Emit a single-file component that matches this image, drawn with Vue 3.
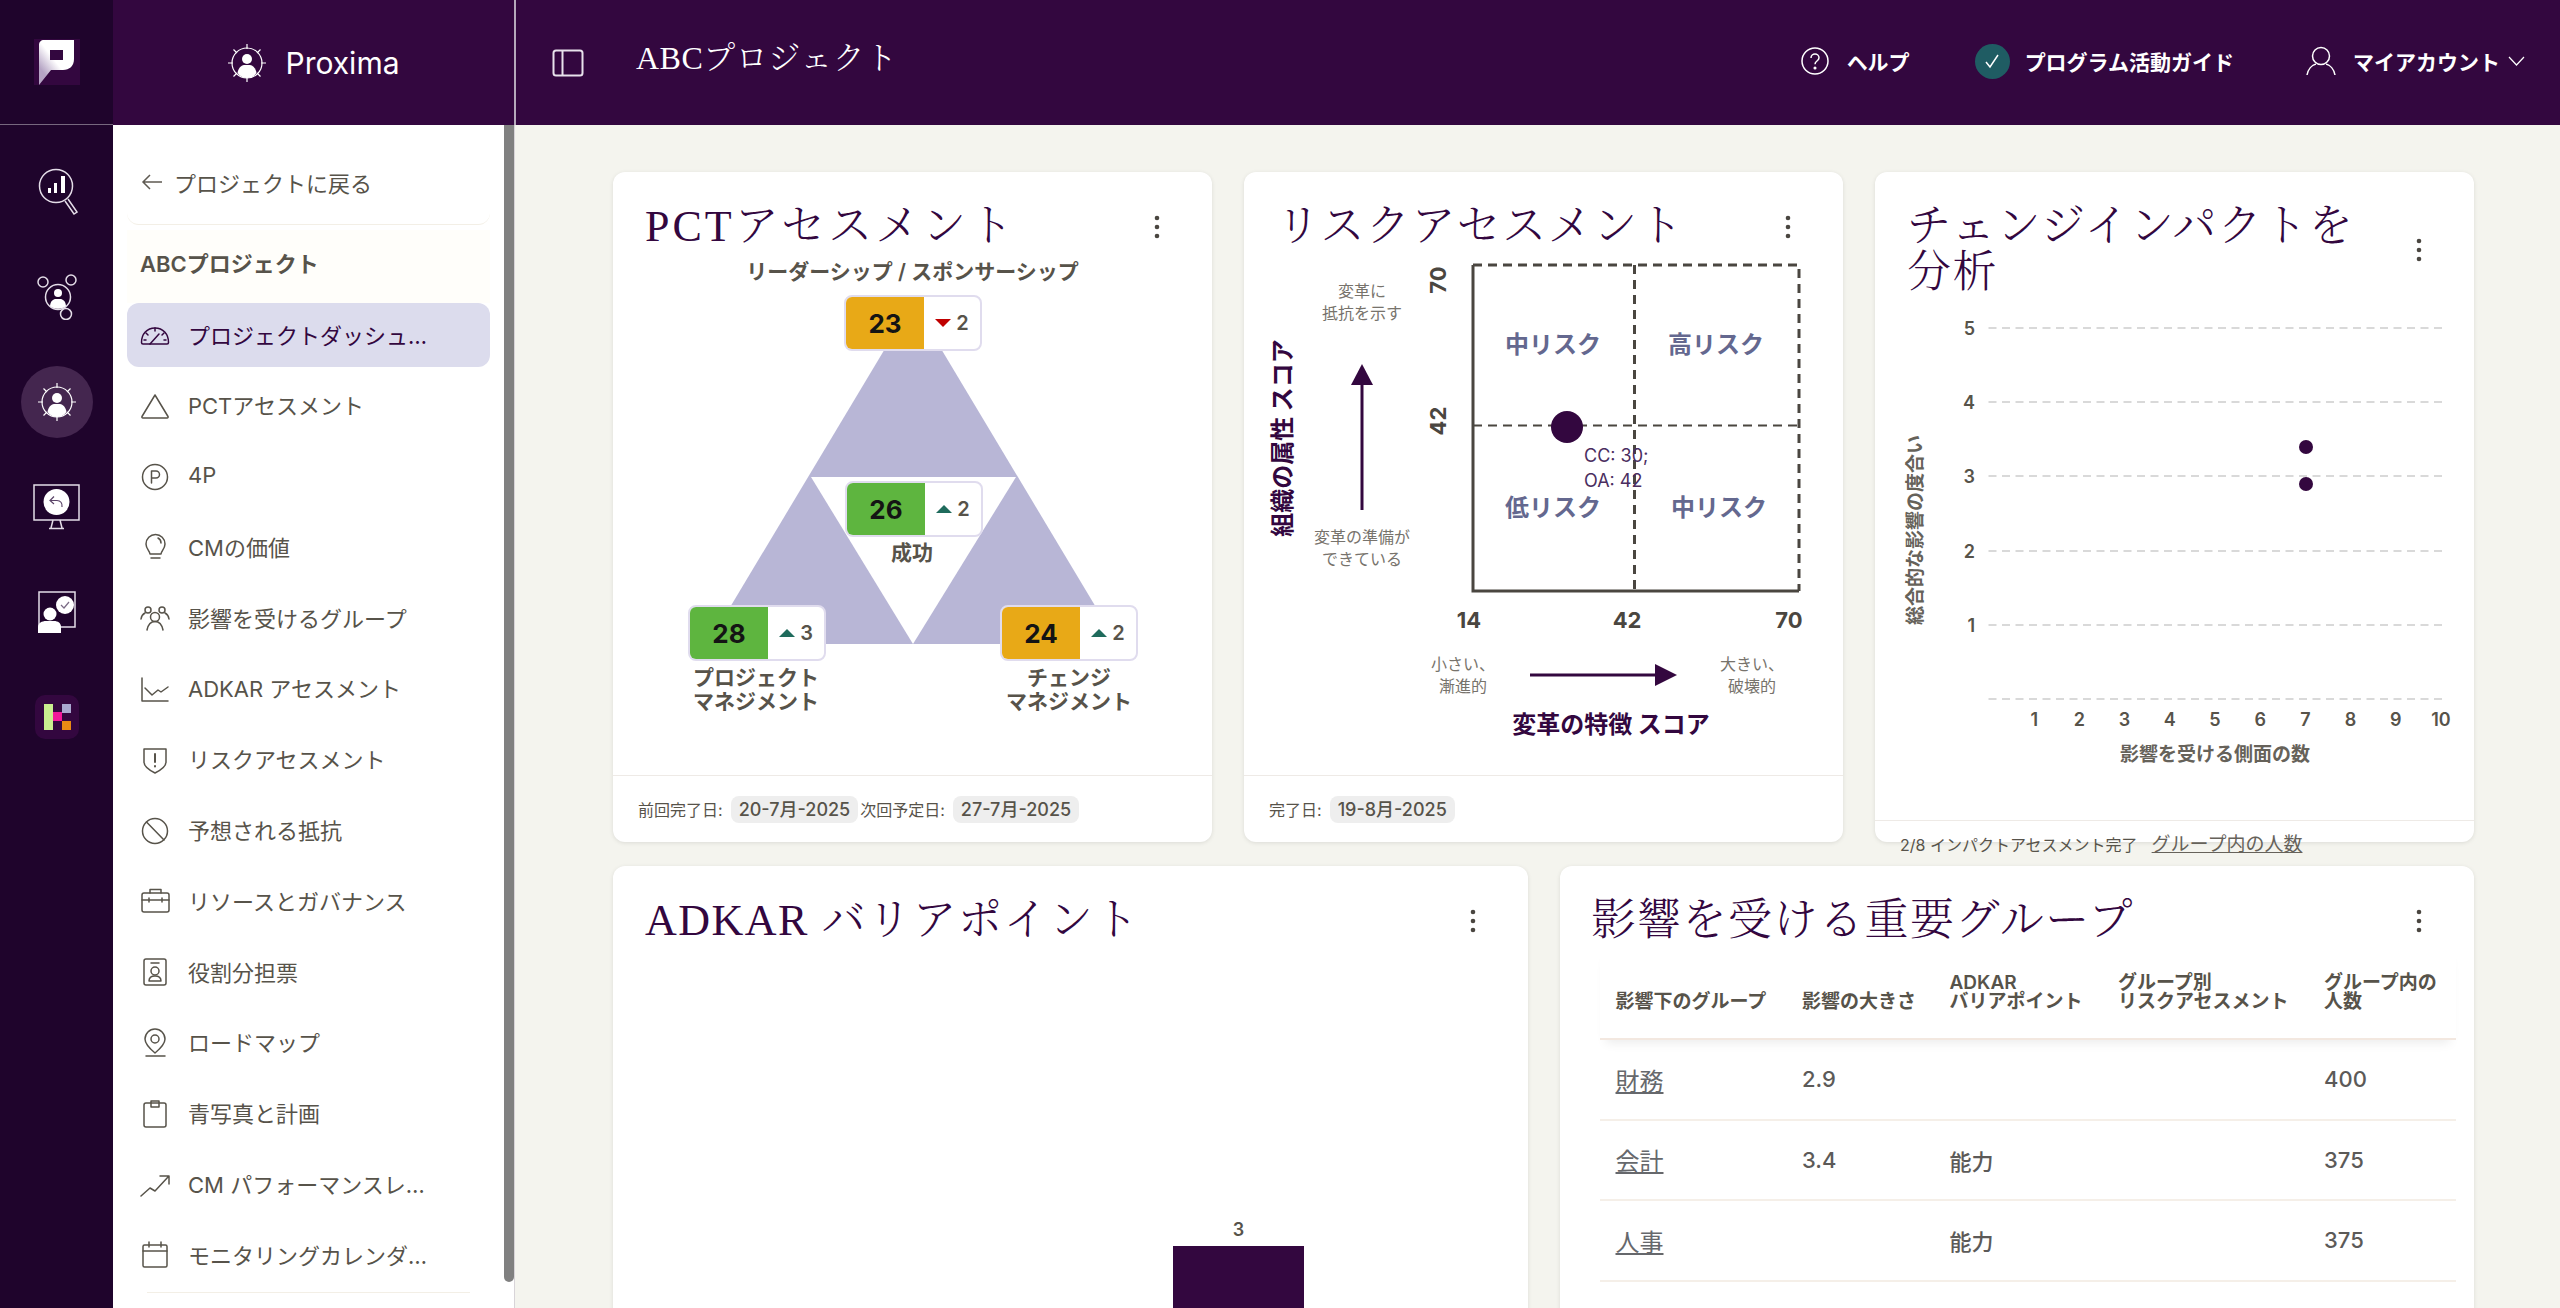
<template>
  <div class="app">
    <svg class="defs" aria-hidden="true">
      <symbol id="proxima" viewBox="0 0 40 40">
        <circle cx="20" cy="20" r="15" fill="none" stroke="currentColor" stroke-width="1.200" />
        <path d="M20 1v5M20 34v5M1 20h5M34 20h5M6.500 6.500l3.500 3.500M33.500 6.500 30 10M6.500 33.500 10 30M33.500 33.500 30 30" fill="none" stroke="currentColor" stroke-width="1.200" />
        <circle cx="20" cy="16" r="5" fill="currentColor" />
        <path d="M10.500 30c.8-5 3.500-7.500 6.500-8h6c3 .5 5.700 3 6.500 8-2.500 3.300-5.500 5-9.500 5s-7-1.700-9.500-5z" fill="currentColor" />
      </symbol>
    </svg>

    <aside class="rail">
      <div class="rail-logo">
        <svg width="46" height="46" viewBox="0 0 46 46">
          <defs>
            <linearGradient id="logoShade" x1="0" y1="1" x2="1" y2="0">
              <stop offset="0.2" stop-color="#b5a4c4" />
              <stop offset="0.5" stop-color="#ffffff" />
            </linearGradient>
          </defs>
          <rect width="46" height="46" fill="#33073f" />
          <path d="M10 1h30v19c0 7-4.500 11-11 11H17L5 46V6c0-3 2-5 5-5z" fill="url(#logoShade)" />
          <rect x="16" y="11" width="13" height="10" fill="#33073f" />
        </svg>
      </div>
      <nav class="rail-list">
        <div class="rail-item">
          <svg width="48" height="52" viewBox="0 0 48 52" fill="none" stroke="#e4dde8" stroke-width="1.500">
            <circle cx="23" cy="20" r="16.500" />
            <path d="M32 35l9 13 3-2-9-13" />
            <path d="M15 22h3v5h-3zM21 17h3v10h-3zM28 10h4v17h-4z" fill="#fff" stroke="none" />
          </svg>
        </div>
        <div class="rail-item">
          <svg width="42" height="46" viewBox="0 0 42 46" fill="none" stroke="#e4dde8" stroke-width="1.500">
            <circle cx="7" cy="8" r="5" />
            <circle cx="35" cy="6" r="5" />
            <circle cx="30" cy="40" r="5.500" />
            <circle cx="22" cy="23" r="12.500" />
            <circle cx="22" cy="19" r="4" fill="#fff" stroke="none" />
            <path d="M14 32c.5-5 3-7 6-7h4c3 0 5.500 2 6 7-4 3.500-12 3.500-16 0z" fill="#fff" stroke="none" />
          </svg>
        </div>
        <div class="rail-item active">
          <svg width="40" height="40" class="proxima-rail"><use href="#proxima" /></svg>
        </div>
        <div class="rail-item">
          <svg width="48" height="46" viewBox="0 0 48 46" fill="none" stroke="#e4dde8" stroke-width="1.500">
            <rect x="1" y="1" width="45" height="35" />
            <path d="M20 36l-2 8M27 36l2 8M16 44.500h15" />
            <circle cx="23.500" cy="18" r="13" fill="#fff" stroke="none" />
            <path d="M29 23c.5-4-1.500-6.500-5-6.500h-6M21 12.500l-4 4 4 3.500" stroke="#5b4468" stroke-width="1.200" />
          </svg>
        </div>
        <div class="rail-item">
          <svg width="40" height="44" viewBox="0 0 40 44" fill="none" stroke="#e4dde8" stroke-width="1.500">
            <rect x="2" y="2" width="36" height="35" />
            <circle cx="28" cy="15" r="9" fill="#fff" stroke="none" />
            <path d="M24 15l3 3 5-6" stroke="#7a6a85" stroke-width="1.200" />
            <circle cx="13" cy="24" r="6.500" fill="#fff" stroke="none" />
            <path d="M1 43v-6c0-4 4-6 8-6h8c4 0 7 2 7 6v6z" fill="#fff" stroke="none" />
          </svg>
        </div>
        <div class="rail-item">
          <svg width="44" height="44" viewBox="0 0 44 44">
            <rect width="44" height="44" rx="10" fill="#33073f" />
            <rect x="9" y="9" width="9" height="26" fill="#c9ee8f" />
            <rect x="18" y="17" width="9" height="9" fill="#f0189a" />
            <rect x="27" y="9" width="9" height="9" fill="#a9a8d0" />
            <rect x="27" y="26" width="9" height="9" fill="#e88a14" />
          </svg>
        </div>
      </nav>
    </aside>

    <div class="shell">
      <header class="topbar">
        <div class="brand">
          <svg width="40" height="40" class="brand-icon"><use href="#proxima" /></svg>
          <span>Proxima</span>
        </div>
        <button class="toggle" type="button" aria-label="メニュー">
          <svg width="32" height="28" viewBox="0 0 32 28" fill="none" stroke="#e8e2ec" stroke-width="2">
            <rect x="1.500" y="1.500" width="29" height="25" rx="2.500" />
            <path d="M10.500 1.500v25" />
          </svg>
        </button>
        <h1 class="project-name">ABCプロジェクト</h1>
        <div class="actions">
          <a class="action help">
            <svg width="28" height="28" viewBox="0 0 28 28" fill="none" stroke="#fff" stroke-width="1.500">
              <circle cx="14" cy="14" r="13" />
              <path d="M10 11c0-2.500 2-4 4-4s4 1.500 4 3.800c0 3.200-4 3.200-4 6.400" />
              <circle cx="14" cy="21" r="0.800" fill="#fff" />
            </svg>
            <span>ヘルプ</span>
          </a>
          <a class="action guide">
            <span class="check">
              <svg width="18" height="18" viewBox="0 0 18 18" fill="none" stroke="#fff" stroke-width="1.500">
                <path d="M3 10l4 5 8-12" />
              </svg>
            </span>
            <span>プログラム活動ガイド</span>
          </a>
          <a class="action account">
            <svg width="30" height="30" viewBox="0 0 30 30" fill="none" stroke="#fff" stroke-width="1.500">
              <circle cx="15" cy="10" r="8.500" />
              <path d="M1 29c1-6 5-10 9-11M29 29c-1-6-5-10-9-11" />
            </svg>
            <span>マイアカウント</span>
            <svg class="chevron" width="17" height="10" viewBox="0 0 17 10" fill="none" stroke="#fff" stroke-width="1.200">
              <path d="M1 1l7.500 8L16 1" />
            </svg>
          </a>
        </div>
      </header>

      <div class="body">
        <aside class="sidebar">
          <div class="back">
            <svg width="22" height="18" viewBox="0 0 22 18" fill="none" stroke="#5f5a52" stroke-width="1.500">
              <path d="M21 9H2M9 2 2 9l7 7" />
            </svg>
            <span>プロジェクトに戻る</span>
          </div>
          <div class="sidebar-project">ABCプロジェクト</div>
          <ul class="nav">
            <li v-for="item in navItems" :key="item.label" class="nav-item" :class="{ active: item.active }">
              <svg class="nav-icon" width="30" height="30" viewBox="0 0 30 30" fill="none" stroke="currentColor" stroke-width="1.500" stroke-linecap="round" stroke-linejoin="round" v-html="item.icon"></svg>
              <span class="nav-label">{{ item.label }}</span>
            </li>
          </ul>
          <div class="nav-end"></div>
          <div class="thumb"></div>
        </aside>

        <main class="main">
          <section class="card third">
            <div class="card-head">
              <h2 class="wide">PCTアセスメント</h2>
              <button class="dots" type="button" aria-label="メニュー">
                <svg width="6" height="24" viewBox="0 0 6 24" fill="#4a4640"><circle cx="3" cy="3" r="2.300" /><circle cx="3" cy="12" r="2.300" /><circle cx="3" cy="21" r="2.300" /></svg>
              </button>
            </div>
            <div class="card-body pct">
              <p class="pct-top">リーダーシップ / スポンサーシップ</p>
              <svg class="pct-shape" width="599" height="526" viewBox="613 250 599 526">
                <path d="M913 302 1118 644H708z" fill="#b8b6d6" />
                <path d="M811 477H1016L913 644z" fill="#fff" />
              </svg>
              <div v-for="node in pctNodes" :key="node.label" class="pct-node" :style="{ left: node.x + 'px', top: node.y + 'px' }">
                <span class="pct-score" :class="node.tone">{{ node.score }}</span>
                <span class="pct-delta">
                  <i class="tri" :class="node.dir"></i>{{ node.delta }}
                </span>
              </div>
              <p class="pct-label success">成功</p>
              <p class="pct-label left">プロジェクト<br />マネジメント</p>
              <p class="pct-label right">チェンジ<br />マネジメント</p>
            </div>
            <footer class="card-foot">
              <span>前回完了日:</span><span class="pill">20-7月-2025</span>
              <span>次回予定日:</span><span class="pill">27-7月-2025</span>
            </footer>
          </section>

          <section class="card third">
            <div class="card-head">
              <h2>リスクアセスメント</h2>
              <button class="dots" type="button" aria-label="メニュー">
                <svg width="6" height="24" viewBox="0 0 6 24" fill="#4a4640"><circle cx="3" cy="3" r="2.300" /><circle cx="3" cy="12" r="2.300" /><circle cx="3" cy="21" r="2.300" /></svg>
              </button>
            </div>
            <div class="card-body">
              <svg class="chart" width="599" height="526" viewBox="1244 250 599 526">
                <path d="M1473 265V591H1799" fill="none" stroke="#4a4640" stroke-width="3" />
                <path d="M1473 265H1799V591M1634.500 265V591" fill="none" stroke="#4a4640" stroke-width="3" stroke-dasharray="9 6" />
                <path d="M1473 425.500H1799" fill="none" stroke="#4a4640" stroke-width="2" stroke-dasharray="9 6" />
                <g class="quad">
                  <text x="1553" y="344">中リスク</text>
                  <text x="1716" y="344">高リスク</text>
                  <text x="1553" y="507">低リスク</text>
                  <text x="1719" y="507">中リスク</text>
                </g>
                <circle cx="1567" cy="427" r="16" fill="#33073f" />
                <text class="point" x="1584" y="455.500">CC: 30;</text>
                <text class="point" x="1584" y="480">OA: 42</text>
                <g class="tick">
                  <text x="1438" y="280" transform="rotate(-90 1438 280)">70</text>
                  <text x="1438" y="421" transform="rotate(-90 1438 421)">42</text>
                  <text x="1469" y="620">14</text>
                  <text x="1627" y="620">42</text>
                  <text x="1789" y="620">70</text>
                </g>
                <path d="M1362 510V384" stroke="#33073f" stroke-width="3" />
                <path d="M1362 364l11 21h-22z" fill="#33073f" />
                <path d="M1530 675H1656" stroke="#33073f" stroke-width="3" />
                <path d="M1677 675l-22-11v22z" fill="#33073f" />
                <g class="note">
                  <text x="1362" y="291">変革に</text>
                  <text x="1362" y="313">抵抗を示す</text>
                  <text x="1362" y="537">変革の準備が</text>
                  <text x="1362" y="559">できている</text>
                </g>
                <g class="note end">
                  <text x="1495" y="663.500">小さい、</text>
                  <text x="1487" y="685.500">漸進的</text>
                  <text x="1784" y="663.500">大きい、</text>
                  <text x="1776" y="685.500">破壊的</text>
                </g>
                <text class="axis" x="1282" y="438" transform="rotate(-90 1282 438)">組織の属性 スコア</text>
                <text class="axis" x="1611" y="724">変革の特徴 スコア</text>
              </svg>
            </div>
            <footer class="card-foot">
              <span>完了日:</span><span class="pill">19-8月-2025</span>
            </footer>
          </section>

          <section class="card third">
            <div class="card-head">
              <h2>チェンジインパクトを<br />分析</h2>
              <button class="dots" type="button" aria-label="メニュー">
                <svg width="6" height="24" viewBox="0 0 6 24" fill="#4a4640"><circle cx="3" cy="3" r="2.300" /><circle cx="3" cy="12" r="2.300" /><circle cx="3" cy="21" r="2.300" /></svg>
              </button>
            </div>
            <div class="card-body">
              <svg class="chart" width="599" height="523" viewBox="1875 296 599 523">
                <path v-for="row in impactRows" :key="row.v" :d="`M1988.500 ${row.y}H2442`" stroke="#d9d9d9" stroke-width="2" stroke-dasharray="8 5.500" />
                <g class="scale end">
                  <text v-for="row in impactRows.slice(0, 5)" :key="row.v" x="1975" :y="row.y">{{ row.v }}</text>
                </g>
                <g class="scale">
                  <text v-for="n in 10" :key="n" :x="1989 + n * 45.200" y="719">{{ n }}</text>
                </g>
                <circle cx="2306" cy="447" r="7" fill="#33073f" />
                <circle cx="2306" cy="484" r="7" fill="#33073f" />
                <text class="impact-axis" x="1915" y="530" transform="rotate(-90 1915 530)">総合的な影響の度合い</text>
                <text class="impact-axis" x="2215" y="754">影響を受ける側面の数</text>
              </svg>
            </div>
            <footer class="card-foot thin">
              <span>2/8 インパクトアセスメント完了</span>
              <a class="foot-link">グループ内の人数</a>
            </footer>
          </section>

          <section class="card half">
            <div class="card-head">
              <h2>ADKAR バリアポイント</h2>
              <button class="dots" type="button" aria-label="メニュー">
                <svg width="6" height="24" viewBox="0 0 6 24" fill="#4a4640"><circle cx="3" cy="3" r="2.300" /><circle cx="3" cy="12" r="2.300" /><circle cx="3" cy="21" r="2.300" /></svg>
              </button>
            </div>
            <div class="card-body bars">
              <div class="bar-col">
                <span>3</span>
                <div class="bar"></div>
              </div>
            </div>
          </section>

          <section class="card half">
            <div class="card-head">
              <h2>影響を受ける重要グループ</h2>
              <button class="dots" type="button" aria-label="メニュー">
                <svg width="6" height="24" viewBox="0 0 6 24" fill="#4a4640"><circle cx="3" cy="3" r="2.300" /><circle cx="3" cy="12" r="2.300" /><circle cx="3" cy="21" r="2.300" /></svg>
              </button>
            </div>
            <div class="card-body groups">
              <table>
                <colgroup>
                  <col class="c1" /><col class="c2" /><col class="c3" /><col class="c4" /><col />
                </colgroup>
                <thead>
                  <tr>
                    <th>影響下のグループ</th>
                    <th>影響の大きさ</th>
                    <th>ADKAR<br />バリアポイント</th>
                    <th>グループ別<br />リスクアセスメント</th>
                    <th>グループ内の<br />人数</th>
                  </tr>
                </thead>
                <tbody>
                  <tr v-for="g in groups" :key="g.name">
                    <td><a class="group-link">{{ g.name }}</a></td>
                    <td>{{ g.impact }}</td>
                    <td>{{ g.barrier }}</td>
                    <td></td>
                    <td>{{ g.people }}</td>
                  </tr>
                </tbody>
              </table>
            </div>
          </section>
        </main>
      </div>
    </div>
  </div>
</template>

<script setup>
const navItems = [
  {
    label: 'プロジェクトダッシュボード',
    active: true,
    icon: '<path d="M3 24h24a1.500 1.500 0 0 0 1.500-1.500C28.500 14 23 8 15 8S1.500 14 1.500 22.500A1.500 1.500 0 0 0 3 24z"/><path d="M10 24l9-10M15 8v3M6 13l2 2M24 13l-2 2M4 20h2M26 20h-2"/>'
  },
  {
    label: 'PCTアセスメント',
    icon: '<path d="M15 4 28 25.500a1 1 0 0 1-1 1.500H3a1 1 0 0 1-1-1.500z"/>'
  },
  {
    label: '4P',
    icon: '<circle cx="15" cy="15" r="12.500"/><path d="M11.500 21V9h4.500a3.500 3.500 0 0 1 0 7h-4.500"/>'
  },
  {
    label: 'CMの価値',
    icon: '<path d="M10 22c0-3-4-5-4-10a9.500 9.500 0 0 1 19 0c0 5-4 7-4 10z"/><path d="M11 26h9M18 6c2 1 3 3 3 5"/>'
  },
  {
    label: '影響を受けるグループ',
    icon: '<circle cx="15" cy="14" r="4.500"/><circle cx="8" cy="7" r="3"/><circle cx="22" cy="7" r="3"/><path d="M7 27c1-5 4-8.500 8-8.500s7 3.500 8 8.500M1 16c.5-3 2-5 4-6M29 16c-.5-3-2-5-4-6"/>'
  },
  {
    label: 'ADKAR アセスメント',
    icon: '<path d="M2 4v23h26M5 14l7 7 6-5 3 2 7-5"/>'
  },
  {
    label: 'リスクアセスメント',
    icon: '<path d="M4 4h22v13c0 5-5 8-11 11C9 25 4 22 4 17z"/><path d="M15 9v8M15 21v.5" stroke-width="2"/>'
  },
  {
    label: '予想される抵抗',
    icon: '<circle cx="15" cy="15" r="12.500"/><path d="M6.500 6 24 24"/>'
  },
  {
    label: 'リソースとガバナンス',
    icon: '<rect x="2" y="7" width="27" height="19" rx="2"/><path d="M10 7V3.500h11V7M2 14h27M9 12v4M22 12v4"/>'
  },
  {
    label: '役割分担票',
    icon: '<rect x="4" y="2" width="22" height="26" rx="2"/><path d="M11 6h8M9 24c0-3 2-5 6-5s6 2 6 5M9 24h12"/><circle cx="15" cy="14" r="4"/>'
  },
  {
    label: 'ロードマップ',
    icon: '<path d="M15 25C9 20 5 16 5 11a10 10 0 0 1 20 0c0 5-4 9-10 14z"/><circle cx="15" cy="11" r="4"/><path d="M6 28h19"/>'
  },
  {
    label: '青写真と計画',
    icon: '<rect x="4" y="4" width="22" height="24" rx="2"/><path d="M11 8V2h8v6z"/>'
  },
  {
    label: 'CM パフォーマンスレポート',
    icon: '<path d="M1 26l9-8 5 3L28 7M20 6h9v8"/>'
  },
  {
    label: 'モニタリングカレンダー',
    icon: '<rect x="3" y="5" width="24" height="22" rx="1.500"/><path d="M3 11h24M9 2v5M21 2v5"/>'
  }
]

const pctNodes = [
  { label: 'leader', x: 231, y: 45, score: 23, delta: 2, tone: 'amber', dir: 'down' },
  { label: 'success', x: 232, y: 231, score: 26, delta: 2, tone: 'green', dir: 'up' },
  { label: 'project', x: 75, y: 355, score: 28, delta: 3, tone: 'green', dir: 'up' },
  { label: 'change', x: 387, y: 355, score: 24, delta: 2, tone: 'amber', dir: 'up' }
]

const impactRows = [
  { v: 5, y: 328 },
  { v: 4, y: 402 },
  { v: 3, y: 476 },
  { v: 2, y: 551 },
  { v: 1, y: 625 },
  { v: 0, y: 699 }
]

const groups = [
  { name: '財務', impact: '2.9', barrier: '', people: 400 },
  { name: '会計', impact: '3.4', barrier: '能力', people: 375 },
  { name: '人事', impact: '', barrier: '能力', people: 375 }
]
</script>

<style>
html,
body {
  margin: 0;
  overflow: hidden;
}
</style>

<style scoped>
.app {
  display: flex;
  height: 100vh;
  overflow: hidden;
  background: #f4f4ee;
  font-family: Inter, "Noto Sans CJK JP", sans-serif;
  color: #57534a;
}

.defs {
  position: absolute;
  width: 0;
  height: 0;
}

/* 左のレール */
.rail {
  flex: 0 0 113px;
  background: #1f042c;
}

.rail-logo {
  display: flex;
  align-items: center;
  justify-content: center;
  height: 124px;
  border-bottom: 1px solid #77687f;
}

.rail-list {
  display: flex;
  flex-direction: column;
  align-items: center;
  gap: 33px;
  padding-top: 31px;
}

.rail-item {
  display: flex;
  align-items: center;
  justify-content: center;
  width: 72px;
  height: 72px;
  border-radius: 50%;
}

.rail-item.active {
  background: #44264f;
}

.proxima-rail {
  color: #fff;
}

.shell {
  flex: 1;
  display: flex;
  flex-direction: column;
  min-width: 0;
}

/* ヘッダー */
.topbar {
  flex: 0 0 125px;
  display: flex;
  align-items: center;
  box-sizing: border-box;
  background: #33073f;
  color: #fff;
}

.brand {
  display: flex;
  align-items: center;
  justify-content: center;
  gap: 18px;
  box-sizing: border-box;
  flex: 0 0 403px;
  height: 100%;
  border-right: 2px solid #b5a8bb;
  font-size: 30px;
}

.brand-icon {
  color: #fff;
}

.toggle {
  display: flex;
  margin-left: 36px;
  padding: 0;
  border: 0;
  background: none;
}

.project-name {
  margin: 0 0 10px 52px;
  font-family: "Liberation Serif", "Noto Serif CJK JP", serif;
  font-size: 32px;
  font-weight: 300;
  line-height: 1;
  letter-spacing: 0.500px;
}

.actions {
  display: flex;
  align-items: center;
  margin-left: auto;
  margin-bottom: 3px;
  padding-right: 35px;
  font-size: 21px;
  font-weight: 700;
}

.action {
  display: flex;
  align-items: center;
}

.help {
  gap: 18px;
  margin-right: 65px;
}

.guide {
  gap: 15px;
  margin-right: 72px;
}

.account {
  gap: 17px;
}

.check {
  display: flex;
  align-items: center;
  justify-content: center;
  width: 35px;
  height: 35px;
  border-radius: 50%;
  background: #1f5c63;
}

.chevron {
  margin-left: -9px;
}

.body {
  flex: 1;
  display: flex;
  min-height: 0;
}

/* サイドバー */
.sidebar {
  position: relative;
  flex: 0 0 402px;
  box-sizing: border-box;
  padding: 23px 24px 0 14px;
  overflow: hidden;
  background: #fff;
  border-right: 1px solid #d8d4d8;
  font-size: 22px;
}

.back {
  display: flex;
  align-items: center;
  gap: 11px;
  box-sizing: border-box;
  height: 77px;
  padding: 0 0 8px 14px;
  border-bottom: 1px solid #f3efe6;
  border-radius: 0 0 12px 12px;
}

.sidebar-project {
  display: flex;
  align-items: center;
  box-sizing: border-box;
  height: 73px;
  margin-top: 5px;
  padding: 0 0 10px 13px;
  background: #fffefa;
  font-weight: 600;
}

.nav {
  display: flex;
  flex-direction: column;
  gap: 6.800px;
  margin: 0;
  padding: 0;
  list-style: none;
}

.nav-item {
  display: flex;
  align-items: center;
  gap: 18px;
  height: 64px;
  padding-left: 13px;
  border-radius: 12px;
}

.nav-item.active {
  background: #dcdced;
  color: #33073f;
}

.nav-icon {
  flex: none;
}

.nav-label {
  width: 240px;
  margin-bottom: 3px;
  overflow: hidden;
  white-space: nowrap;
  text-overflow: ellipsis;
}

.nav-end {
  margin: 5px 20px 0;
  border-top: 1px solid #f3efe6;
}

.thumb {
  position: absolute;
  top: 0;
  right: 0;
  width: 10px;
  height: 1157px;
  border-radius: 0 0 5px 5px;
  background: #808080;
}

/* カード */
.main {
  flex: 1;
  display: grid;
  grid-template-columns: repeat(6, 1fr);
  grid-template-rows: 670px 620px;
  gap: 24px 32px;
  box-sizing: border-box;
  min-width: 0;
  padding: 47px 86px 0 98px;
}

.card {
  display: flex;
  flex-direction: column;
  min-width: 0;
  border-radius: 12px;
  background: #fff;
  box-shadow: 0 1px 4px rgba(0, 0, 0, 0.1);
}

.third {
  grid-column: span 2;
}

.half {
  grid-column: span 3;
}

.card-head {
  display: flex;
  align-items: center;
  justify-content: space-between;
  padding: 32px 35px 0 32px;
}

.card-head h2 {
  margin: 0;
  font-family: "Liberation Serif", "Noto Serif CJK JP", serif;
  font-size: 44px;
  font-weight: 300;
  line-height: 46px;
  letter-spacing: 1.500px;
  color: #33073f;
}

.card-head h2.wide {
  letter-spacing: 3px;
}

.dots {
  display: flex;
  justify-content: center;
  flex: 0 0 40px;
  padding: 0;
  border: 0;
  background: none;
}

.card-body {
  position: relative;
  flex: 1;
  min-height: 0;
}

.card-foot {
  display: flex;
  align-items: center;
  gap: 8px;
  box-sizing: border-box;
  height: 67px;
  padding: 0 0 0 25px;
  border-top: 1px solid #eeeae6;
  font-size: 16px;
}

.card-foot span + span:not(.pill) {
  margin-left: -6px;
}

.pill {
  padding: 0 8px;
  height: 27px;
  line-height: 27px;
  border-radius: 8px;
  background: #eeeeee;
  font-size: 18px;
  font-weight: 500;
}

.card-foot.thin {
  align-items: flex-start;
  height: 22px;
  gap: 14px;
  padding-top: 13px;
}

.card-foot.thin span {
  line-height: 22px;
}

.foot-link {
  font-size: 19px;
  line-height: 22px;
  text-decoration: underline;
  color: #66625a;
}

/* PCT の三角形 */
.pct-top {
  margin: 0;
  padding-top: 10px;
  text-align: center;
  font-size: 21px;
  font-weight: 600;
  line-height: 24px;
}

.pct-shape {
  position: absolute;
  top: 0;
  left: 0;
}

.pct-node {
  position: absolute;
  display: flex;
  box-sizing: border-box;
  width: 138px;
  height: 56px;
  overflow: hidden;
  border: 2px solid #e0dcee;
  border-radius: 8px;
  background: #fff;
}

.pct-score {
  display: flex;
  align-items: center;
  justify-content: center;
  flex: 0 0 78px;
  font-size: 26px;
  font-weight: 700;
  color: #141414;
}

.pct-score.amber {
  background: #e8a917;
}

.pct-score.green {
  background: #5eb53f;
}

.pct-delta {
  flex: 1;
  display: flex;
  align-items: center;
  justify-content: center;
  gap: 5px;
  font-size: 20px;
  font-weight: 600;
}

.tri {
  width: 0;
  height: 0;
  border-left: 8px solid transparent;
  border-right: 8px solid transparent;
}

.tri.up {
  border-bottom: 8px solid #1f6b5c;
}

.tri.down {
  border-top: 8px solid #c00000;
}

.pct-label {
  position: absolute;
  width: 200px;
  margin: 0;
  text-align: center;
  font-size: 21px;
  font-weight: 600;
  line-height: 24px;
}

.pct-label.success {
  left: 199px;
  top: 291px;
}

.pct-label.left {
  left: 43px;
  top: 416px;
}

.pct-label.right {
  left: 356px;
  top: 416px;
}

/* グラフ */
.chart {
  display: block;
}

.chart text {
  dominant-baseline: central;
  text-anchor: middle;
  font-family: Inter, "Noto Sans CJK JP", sans-serif;
}

.quad text {
  font-size: 24px;
  font-weight: 600;
  fill: #64688f;
}

.chart .point {
  text-anchor: start;
  font-size: 18px;
  fill: #4a2d60;
}

.tick text {
  font-size: 22px;
  font-weight: 700;
  fill: #4a4640;
}

.note text {
  font-size: 16px;
  fill: #77736c;
}

.chart .note.end text,
.chart .scale.end text {
  text-anchor: end;
}

.chart .axis {
  font-size: 24px;
  font-weight: 700;
  fill: #33073f;
}

.scale text {
  font-size: 18px;
  font-weight: 600;
  fill: #57534a;
}

.chart .impact-axis {
  font-size: 19px;
  font-weight: 600;
  fill: #66625a;
}

/* 棒グラフ */
.bars {
  display: flex;
  overflow: hidden;
}

.bar-col {
  display: flex;
  flex-direction: column;
  align-items: center;
  width: 131px;
  margin: 277px 0 0 560px;
  font-size: 18px;
  font-weight: 600;
}

.bar-col span {
  line-height: 18px;
  margin-bottom: 7px;
}

.bar {
  align-self: stretch;
  height: 100px;
  background: #33073f;
}

/* テーブル */
.groups {
  padding: 0 18px 0 40px;
  overflow: hidden;
}

table {
  width: 100%;
  table-layout: fixed;
  border-collapse: collapse;
}

.c1 {
  width: 186.500px;
}

.c2 {
  width: 147.500px;
}

.c3 {
  width: 168.500px;
}

.c4 {
  width: 206px;
}

th {
  height: 95px;
  box-sizing: border-box;
  padding: 0 0 27px 16px;
  vertical-align: bottom;
  text-align: left;
  font-size: 19px;
  font-weight: 600;
  line-height: 19px;
  white-space: nowrap;
}

thead tr {
  border-bottom: 2px solid #f3e8e0;
  box-shadow: 0 10px 10px -6px rgba(0, 0, 0, 0.08);
}

td {
  height: 78.500px;
  padding: 0 0 0 16px;
  border-bottom: 2px solid #f5efe8;
  font-size: 22px;
  font-weight: 500;
  color: #5c5a58;
}

.group-link {
  font-size: 24px;
  font-weight: 400;
  color: #66686c;
  text-decoration: underline;
}
</style>
